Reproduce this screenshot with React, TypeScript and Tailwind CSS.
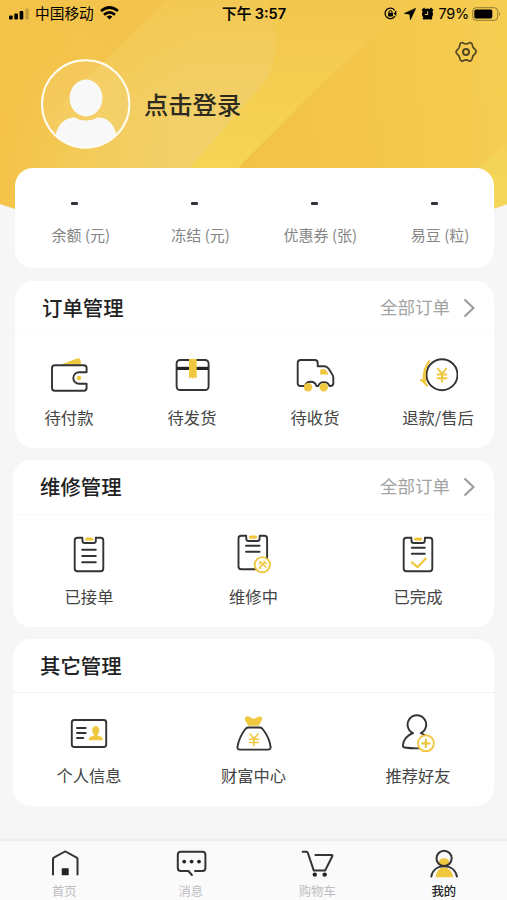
import type { ReactNode } from "react";

const DARK = "#333333";
const YELLOW = "#efc83f";

interface IconProps {
  children: ReactNode;
  size?: number;
}

function Icon({ children, size = 40 }: IconProps) {
  return (
    <svg
      width={size}
      height={size}
      viewBox={`0 0 ${size} ${size}`}
      fill="none"
      stroke={DARK}
      strokeWidth={1.9}
      strokeLinecap="round"
      strokeLinejoin="round"
      className="shrink-0"
    >
      {children}
    </svg>
  );
}

function WalletIcon() {
  return (
    <Icon>
      <path d="M12 9.5 28 3.5q3-1 3.5 2l.8 4Z" fill={YELLOW} stroke="none" />
      <path d="M37.6 17.2V13q0-2.8-2.8-2.8H5.8Q3 10.2 3 13v20q0 2.7 2.8 2.7h29q2.8 0 2.8-2.7v-4.2h-7.5a5.8 5.8 0 0 1 0-11.6Z" />
      <circle cx="30" cy="23" r="2.2" fill={YELLOW} stroke="none" />
    </Icon>
  );
}

function BoxIcon() {
  return (
    <Icon>
      <rect x="4.6" y="5" width="32" height="30" rx="3.5" />
      <path d="M5 13.4h31.5" strokeWidth="3.2" stroke="#222" strokeLinecap="butt" />
      <path d="M17 4h7.7v19.5l-1.7-1.3-2.2 1.3-2.1-1.3-1.7 1.3Z" fill={YELLOW} stroke="none" />
    </Icon>
  );
}

function TruckIcon() {
  return (
    <Icon>
      <path d="M7.5 31H5.5Q2.7 31 2.7 28.2V8Q2.7 5 5.7 5h14.2q2.800 0 2.800 2.800v3.500h6.500q2.800 0 4.500 2.500l3.600 5.700q1 1.500 1 3.200V28q0 3-3 3h-.8a6 6 0 0 0-11.200 0h-1.800a6 6 0 0 0-11.500 0Z" />
      <path d="M26.200 14.200H30.500L33.800 19.500H25.200V15.200q0-1 1-1Z" fill={YELLOW} stroke="none" />
      <circle cx="13" cy="32.200" r="4.200" fill={YELLOW} stroke="none" />
      <circle cx="28.800" cy="32.200" r="4.200" fill={YELLOW} stroke="none" />
    </Icon>
  );
}

function RefundIcon() {
  return (
    <Icon>
      <circle cx="24" cy="19.700" r="15.500" />
      <path d="M19.800 13.500 24 18.800l4.200-5.300M24 19v7.800M19.500 19.500h9M19.500 23.200h9" stroke={YELLOW} />
      <path d="M11.300 6.300Q5.500 13 5.600 25.200M3 25.300h3.200M4.300 25.500l4.700 5" stroke={YELLOW} strokeWidth="2.200" />
      <path d="M8.300 12Q6 19 7.500 27.500" stroke={YELLOW} strokeWidth="1.600" />
    </Icon>
  );
}

const CLIPBOARD =
  "M13.500 3.700H8.400q-2.700 0-2.700 2.700v28.200q0 2.700 2.700 2.700h23.200q2.700 0 2.700-2.700V6.400q0-2.700-2.700-2.700h-4.800v3q0 2.300-2.300 2.300h-8.700q-2.300 0-2.300-2.300Z";

// The clip gap is left open at the top of the board
function Clipboard() {
  return (
    <>
      <path d={CLIPBOARD} />
      <path d="M14.500 3.300h11.300" stroke="white" strokeWidth="3" strokeLinecap="butt" />
      <path d="M17.700 5.100h5" stroke={YELLOW} strokeWidth="3.400" />
    </>
  );
}

function ReceivedIcon() {
  return (
    <Icon>
      <Clipboard />
      <path d="M13.200 15.700h13.600M13.200 22h13.600M13.200 28.200h13.600" />
    </Icon>
  );
}

function RepairingIcon() {
  return (
    <Icon>
      <g transform="translate(-1.200 -2)">
        <Clipboard />
        <path d="M13.200 13.700h13.600M13.200 19.700h13.600" />
      </g>
      <circle cx="28.300" cy="30.700" r="7.600" fill="white" stroke={YELLOW} strokeWidth="1.900" />
      <path d="m25.500 33.500 5.500-5.500M26 27.500l2 1.500 4 4.300M25 30l2-1.500M30 27.200l2.300 2.300M25.300 34h1.600" stroke={YELLOW} strokeWidth="1.500" />
    </Icon>
  );
}

function DoneIcon() {
  return (
    <Icon>
      <Clipboard />
      <path d="M13.800 13.700h13M13.800 19.700h13" />
      <path d="m13.800 28.200 5.700 5 8.300-8.700" stroke={YELLOW} strokeWidth="2.200" />
    </Icon>
  );
}

function ProfileIcon() {
  return (
    <Icon>
      <rect x="2.800" y="7" width="34.400" height="27" rx="2.500" />
      <path d="M8 15h8.700M8 20h8.700M8 25h6.300" />
      <path d="M26.700 13a3.900 4.500 0 0 1 2 8.200v1.500l3.600 1q1.600.8 1.600 3.600H19.600q0-2.800 1.600-3.600l3.600-1v-1.500a3.900 4.500 0 0 1 1.900-8.200Z" fill={YELLOW} stroke="none" />
    </Icon>
  );
}

function WealthIcon() {
  return (
    <Icon>
      <path d="M14.500 12.700 11.200 7.800q-1.200-4.300 2.400-4.500 2-.1 4.200 2 2 1.200 4.200-.3 3.200-2.300 5.300-1 2.200 1.600-.3 4.800l-2.500 3.900Z" fill={YELLOW} stroke="none" />
      <path d="M14 14.500h12q1.500 0 3 2 6.300 8 7.600 17.200.3 2.900-2.600 2.900H6q-2.900 0-2.500-2.900Q5 24.500 11 16.500q1.500-2 3-2Z" />
      <path d="m16 21 4 4.700 4-4.700M20 26v6.800M15.500 26.300h9M15.500 29.500h9" stroke={YELLOW} strokeWidth="1.600" />
    </Icon>
  );
}

function InviteIcon() {
  return (
    <Icon>
      <path d="M15 20a9.300 9.300 0 1 1 7.800 0l4.200 2.300M15 20Q5.600 23.800 4.900 32.500q0 1.800 1.800 2 6.200 1 15 .8" />
      <circle cx="27.900" cy="30.300" r="8" fill="white" stroke={YELLOW} />
      <path d="M24.300 30.300h7.200M27.900 26.700v7.200" stroke={YELLOW} strokeWidth="2.200" />
    </Icon>
  );
}

function HomeIcon() {
  return (
    <Icon size={36}>
      <path d="M7 29.500V14q0-.8.8-1.300L18 7q1.200-.8 2.400 0l10.300 5.700q.8.500.8 1.300v15.500" strokeWidth="2" />
      <rect x="15.700" y="23.300" width="7" height="7" rx="0.500" fill="#222" stroke="none" />
    </Icon>
  );
}

function MessageIcon() {
  return (
    <Icon size={36}>
      <path d="m18.900 30-3.500-4H7.800q-3 0-3-3V9.700q0-3 3-3h21.600q3 0 3 3V23q0 3-3 3H22" strokeWidth="2" />
      <g fill="#222" stroke="none">
        <circle cx="11.200" cy="16.600" r="1.900" />
        <circle cx="18.600" cy="16.600" r="1.900" />
        <circle cx="26" cy="16.600" r="1.900" />
      </g>
    </Icon>
  );
}

function CartIcon() {
  return (
    <Icon size={36}>
      <path d="M3.700 6.700h3.700q1 0 1.400 1.100l6 17.800h11.300L33.400 11q.3-1.100-.9-1.100H16.400" strokeWidth="2" />
      <circle cx="15.800" cy="29.600" r="2.200" fill="#222" stroke="none" />
      <circle cx="25.700" cy="29.600" r="2.200" fill="#222" stroke="none" />
    </Icon>
  );
}

function MineIcon() {
  return (
    <Icon size={36}>
      <ellipse cx="18.100" cy="17" rx="5.200" ry="3.800" fill={YELLOW} stroke="none" />
      <path d="M9.500 32.200q1.500-9.700 8.600-9.700t9.100 9.700Z" fill={YELLOW} stroke="none" />
      <circle cx="18.100" cy="13.300" r="7.600" strokeWidth="2" />
      <path d="M5.300 31.500C6.500 25 11.500 21.200 18.100 21.200S29.700 25 30.900 31.500" strokeWidth="2" />
    </Icon>
  );
}

const stats = ["余额 (元)", "冻结 (元)", "优惠券 (张)", "易豆 (粒)"];

const orders = [
  { label: "待付款", icon: <WalletIcon /> },
  { label: "待发货", icon: <BoxIcon /> },
  { label: "待收货", icon: <TruckIcon /> },
  { label: "退款/售后", icon: <RefundIcon /> },
];

const repairs = [
  { label: "已接单", icon: <ReceivedIcon /> },
  { label: "维修中", icon: <RepairingIcon /> },
  { label: "已完成", icon: <DoneIcon /> },
];

const others = [
  { label: "个人信息", icon: <ProfileIcon /> },
  { label: "财富中心", icon: <WealthIcon /> },
  { label: "推荐好友", icon: <InviteIcon /> },
];

const tabs = [
  { label: "首页", icon: <HomeIcon /> },
  { label: "消息", icon: <MessageIcon /> },
  { label: "购物车", icon: <CartIcon /> },
  { label: "我的", icon: <MineIcon />, active: true },
];

function HeaderBackground() {
  return (
    <svg className="absolute left-0 top-0" width="507" height="214" viewBox="0 0 507 214">
      <defs>
        <clipPath id="header-clip">
          <path d="M0 0H507V204L494 208.500Q253 250 14 208.500L0 204Z" />
        </clipPath>
        <linearGradient id="base" x1="0" y1="0" x2="0" y2="1">
          <stop offset="0" stopColor="#f3c64d" />
          <stop offset="0.750" stopColor="#f6d454" />
        </linearGradient>
        <linearGradient id="pale" gradientUnits="userSpaceOnUse" x1="10" y1="120" x2="180" y2="150">
          <stop offset="0" stopColor="#f4c248" />
          <stop offset="0.450" stopColor="#f3cb59" />
          <stop offset="1" stopColor="#f2d069" />
        </linearGradient>
        <linearGradient id="pale-top" x1="0" y1="0" x2="0" y2="1">
          <stop offset="0" stopColor="#f3c74e" stopOpacity="0.800" />
          <stop offset="0.500" stopColor="#f3c74e" stopOpacity="0" />
        </linearGradient>
        <linearGradient id="left" gradientUnits="userSpaceOnUse" x1="140" y1="20" x2="20" y2="150">
          <stop offset="0" stopColor="#f3c34c" />
          <stop offset="0.450" stopColor="#f4c248" stopOpacity="0.700" />
          <stop offset="1" stopColor="#f4c248" stopOpacity="0" />
        </linearGradient>
        <linearGradient id="right" gradientUnits="userSpaceOnUse" x1="240" y1="150" x2="507" y2="130">
          <stop offset="0" stopColor="#f3c147" />
          <stop offset="1" stopColor="#f5cd51" />
        </linearGradient>
        <linearGradient id="corner" gradientUnits="userSpaceOnUse" x1="480" y1="150" x2="507" y2="190">
          <stop offset="0" stopColor="#f4d055" />
          <stop offset="1" stopColor="#f4d75a" />
        </linearGradient>
      </defs>
      <g clipPath="url(#header-clip)">
        <rect width="507" height="214" fill="url(#base)" />
        <path d="M0 0H264C282 38 278 72 253 95L207 148 150 214H0Z" fill="url(#pale)" />
        <path d="M0 0H264C282 38 278 72 253 95L207 148 150 214H0Z" fill="url(#pale-top)" />
        <path d="M0 0H167L0 162Z" fill="url(#left)" />
        <path d="M408 0H507V214H200L240 166 330 75Z" fill="url(#right)" />
        <path d="M507 142 475 172V214H507Z" fill="url(#corner)" />
      </g>
    </svg>
  );
}

function StatusBar() {
  return (
    <div className="flex h-[27px] items-center pl-[9px] pr-[5px] text-[14.700px] text-black">
      <div className="flex w-[213px] items-center">
        <svg width="21" height="13" viewBox="0 0 21 13">
          <rect x="0" y="8.500" width="3.700" height="4" rx="1" />
          <rect x="5.300" y="6.500" width="3.700" height="6" rx="1" />
          <rect x="10.600" y="4" width="3.700" height="8.500" rx="1" />
          <rect x="16.300" y="1.500" width="3.500" height="11" rx="1" opacity="0.200" />
        </svg>
        <span className="ml-[5px]">中国移动</span>
        <svg className="ml-[6px]" width="19" height="14" viewBox="0 0 19 14" fill="none" stroke="black" strokeWidth="2.700">
          <path d="M1 5Q9.500-2 18 5M4 8.700q5.500-4.500 11 0" />
          <path d="M9.500 13.500 6.600 10.600q2.900-2.200 5.800 0Z" fill="black" stroke="none" />
        </svg>
      </div>
      <div className="flex-1 whitespace-nowrap font-medium [-webkit-text-stroke:0.200px_black]">
        下午 <span className="font-['Inter'] text-[14.500px] font-semibold [-webkit-text-stroke:0]">3:57</span>
      </div>
      <div className="flex items-center">
        <svg width="13" height="13" viewBox="0 0 13 13" fill="none" stroke="black" strokeWidth="1.300">
          <path d="M10.700 3.300A5.300 5.300 0 1 0 11 9M11.700 4v3.500l-1.700-1.500" />
          <rect x="4" y="5.700" width="5" height="3.800" rx="0.500" fill="black" stroke="none" />
          <path d="M5 6V5a1.500 1.500 0 0 1 3 0v1" strokeWidth="1" />
        </svg>
        <svg className="ml-[7px]" width="12" height="12" viewBox="0 0 12 12">
          <path d="M11.800.2.200 5.400l5.500.9.700 5.600Z" stroke="black" strokeWidth="0.500" strokeLinejoin="round" />
        </svg>
        <svg className="ml-[5px]" width="13" height="13" viewBox="0 0 13 13">
          <circle cx="6.500" cy="7" r="5.500" />
          <path d="M1.300 3.900 3.800 1.400M11.700 3.900 9.200 1.400M2.300 12.200l1.700-1.700M10.700 12.200l-1.700-1.700" stroke="black" strokeWidth="2.200" />
          <path d="M6.700 4.300V7.500H4" fill="none" stroke="#f4cb50" strokeWidth="1" />
        </svg>
        <span className="ml-[5px] font-['Inter'] text-[14.500px] tracking-[-0.300px]">79%</span>
        <svg className="ml-[3px]" width="30" height="14" viewBox="0 0 30 14">
          <rect x="0.700" y="0.700" width="25" height="12.600" rx="3.500" fill="none" stroke="black" strokeOpacity="0.400" />
          <rect x="2.300" y="2.500" width="18" height="9" rx="1.700" />
          <path d="M27.300 5q2 2 0 4Z" opacity="0.400" />
        </svg>
      </div>
    </div>
  );
}

function Header() {
  return (
    <header className="relative h-[168px] shrink-0">
      <HeaderBackground />
      <div className="relative">
        <StatusBar />
        <div className="flex pl-10 pr-[30px] pt-8">
          <svg width="91" height="91" viewBox="0 0 91 91">
            <defs>
              <clipPath id="avatar-clip">
                <circle cx="45.700" cy="45" r="43.500" />
              </clipPath>
            </defs>
            <circle cx="45.700" cy="45" r="43.700" fill="white" fillOpacity="0.080" />
            <g fill="#f8f8f8" clipPath="url(#avatar-clip)">
              <ellipse cx="46" cy="39" rx="16.500" ry="18.500" />
              <path d="M15 78Q18 64 27 60q4-2 8-1.500 4 3 11 3t11-3q7-.5 11 3 7 5 9 16.500V91H15Z" />
            </g>
            <circle cx="45.700" cy="45" r="43.700" fill="none" stroke="#fffdf5" strokeWidth="2" />
          </svg>
          <h1 className="ml-[13px] mt-[27px] text-[24.300px] leading-9 font-medium text-[#2d2b20]">点击登录</h1>
          <svg
            className="-mt-[18px] ml-auto"
            width="22"
            height="22"
            viewBox="0 0 22 22"
            fill="none"
            stroke="#504622"
            strokeWidth="1.700"
            strokeLinejoin="round"
          >
            <path d="M6.300 1.800Q7.500 1.300 8.400 2.200q2.600 1.400 5.200 0 1-.9 2.100-.4 1.600.9 1.600 2.200.2 2.800 2.600 4.200 1.500 1.300 1 2.800-.3 1.400-1.400 2.200-1.900 1.200-2.200 3.800-.1 2-1.800 2.900-1.200.5-2.200-.4-2.300-1.100-4.600 0-1 .9-2.200.4-1.600-.8-1.700-2.600-.3-2.800-2.400-4.100Q1.100 12.300 1.100 11t1.300-2.200Q4.600 7.200 4.700 4.500q0-2 1.600-2.700Z" />
            <circle cx="11" cy="11" r="3" strokeWidth="2" />
          </svg>
        </div>
      </div>
    </header>
  );
}

interface SectionProps {
  title: string;
  more?: boolean;
  items: { label: string; icon: ReactNode }[];
  className: string;
  headClass: string;
  gridClass: string;
}

function Section({ title, more, items, className, headClass, gridClass }: SectionProps) {
  return (
    <section className={`shrink-0 rounded-[18px] bg-white ${className}`}>
      <div className={`flex items-center justify-between border-b pl-[27px] pr-[19px] ${headClass}`}>
        <h2 className="text-[20.400px] leading-7 font-medium text-[#222222]">{title}</h2>
        {more && (
          <div className="flex items-center text-[17.500px] leading-7 text-[#a3a3a3]">
            <span>全部订单</span>
            <svg className="ml-[13px] mt-px" width="12" height="20" viewBox="0 0 12 20" fill="none" stroke="#999999" strokeWidth="2">
              <path d="m1.500 1.500 9 8.500-9 8.500" />
            </svg>
          </div>
        )}
      </div>
      {/* Shortcuts */}
      <div className={`flex justify-between ${gridClass}`}>
        {items.map((item) => (
          <div key={item.label} className="flex w-[72px] flex-col items-center">
            {item.icon}
            <span className="mt-[10px] whitespace-nowrap text-[16.300px] leading-6 text-[#444444]">{item.label}</span>
          </div>
        ))}
      </div>
    </section>
  );
}

export default function App() {
  return (
    <div className="flex h-[900px] w-[507px] flex-col overflow-hidden bg-[#f6f6f6] font-['Noto_Sans_CJK_SC',sans-serif]">
      <Header />
      <main className="relative flex flex-1 flex-col">
        {/* Balance */}
        <section className="ml-[15px] mr-[13px] flex h-[100px] shrink-0 rounded-[18px] bg-white">
          {stats.map((label) => (
            <div key={label} className="flex flex-1 flex-col items-center">
              <div className="mt-[34px] h-[3px] w-[7px] rounded-[1px] bg-[#30333a]" />
              <span className="mt-[18px] whitespace-nowrap pl-3 text-[15px] leading-6 text-[#858585]">{label}</span>
            </div>
          ))}
        </section>

        <Section
          title="订单管理"
          more
          items={orders}
          className="ml-[15px] mr-[13px] mt-[13px] h-[167px]"
          headClass="h-[54px] pb-px border-[#fbfbfb]"
          gridClass="pl-[18px] pr-[20px] pt-5"
        />
        <Section
          title="维修管理"
          more
          items={repairs}
          className="mx-[13px] mt-3 h-[167px]"
          headClass="h-[55px] pb-[2px] border-[#fafafa]"
          gridClass="px-10 pt-[19px]"
        />
        <Section
          title="其它管理"
          items={others}
          className="mx-[13px] mt-3 h-[167px]"
          headClass="h-[54px] pb-[2px] border-[#f1f1f1]"
          gridClass="px-10 pt-5"
        />
      </main>

      {/* Tab bar */}
      <nav className="flex h-[61px] shrink-0 border-t-2 border-[#eeeeee] bg-[#fafafa] pl-px pt-1">
        {tabs.map((tab) => (
          <div key={tab.label} className="flex flex-1 flex-col items-center">
            {tab.icon}
            <span
              className={`text-[12.300px] leading-[20px] ${
                tab.active ? "font-medium text-[#222222]" : "text-[#bdbdc1]"
              }`}
            >
              {tab.label}
            </span>
          </div>
        ))}
      </nav>
    </div>
  );
}
